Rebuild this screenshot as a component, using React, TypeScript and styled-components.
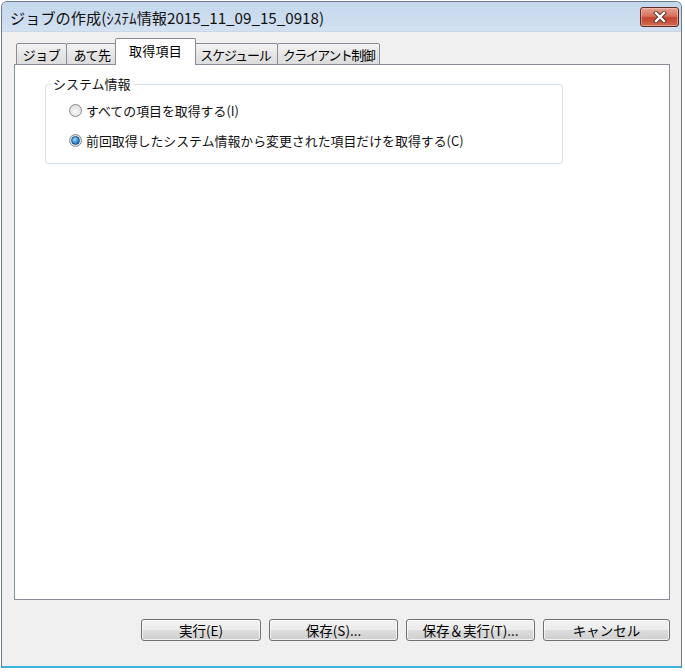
import React from "react";
import styled, { createGlobalStyle } from "styled-components";

const GlobalStyle = createGlobalStyle`
  html, body { margin: 0; padding: 0; background: #ffffff; }
  body { font-family: "Noto Sans CJK JP", "Noto Sans", sans-serif; }
  * { box-sizing: border-box; }
`;

const Page = styled.div`
  padding: 1px 0 0 1px;
  width: 685px;
  height: 672px;
`;

const Window = styled.div`
  width: 681px;
  height: 667px;
  display: flex;
  flex-direction: column;
  border: 1px solid #6f7a88;
  border-bottom: 2px solid #3bb3dc;
  border-radius: 6px 6px 0 0;
  overflow: hidden;
  background: #f0f0f0;
`;

const TitleBar = styled.div`
  height: 30px;
  flex: none;
  display: flex;
  align-items: center;
  justify-content: space-between;
  padding: 0 2px 0 8px;
  background: linear-gradient(#c4d7ec, #d3e1f1);
  border-bottom: 1px solid #c9d7e6;
`;

const TitleText = styled.div`
  font-size: 15.2px;
  color: #111;
  line-height: 18px;
  padding-top: 1px;
`;

const CloseButton = styled.div`
  width: 39px;
  height: 20px;
  margin-top: 1px;
  border: 1px solid #5e2a21;
  border-radius: 3px;
  background: linear-gradient(#e7a391 0%, #d7705c 45%, #c44530 55%, #cf6a4f 100%);
  box-shadow: inset 0 0 0 1px rgba(255, 220, 210, 0.45);
  display: flex;
  align-items: center;
  justify-content: center;
`;

const Body = styled.div`
  flex: 1;
  display: flex;
  flex-direction: column;
  padding: 6px 11px 25px 12px;
  background: #f0f0f0;
`;

const TabStrip = styled.div`
  height: 27px;
  flex: none;
  display: flex;
  align-items: flex-end;
  padding-left: 2px;
  position: relative;
  z-index: 1;
  margin-bottom: -1px;
`;

const Tab = styled.div<{ $w: number; $ls: number; $selected?: boolean; $first?: boolean }>`
  width: ${(p) => p.$w}px;
  height: ${(p) => (p.$selected ? 27 : 22)}px;
  margin-left: ${(p) => (p.$first ? 0 : p.$selected ? -3 : -1)}px;
  margin-right: ${(p) => (p.$selected ? -2 : 0)}px;
  border: 1px solid #898c95;
  border-bottom: ${(p) => (p.$selected ? "none" : "1px solid #898c95")};
  border-radius: 2px 2px 0 0;
  background: ${(p) =>
    p.$selected ? "#ffffff" : "linear-gradient(#f3f3f3, #e6e6e6 50%, #dcdcdc)"};
  position: relative;
  z-index: ${(p) => (p.$selected ? 2 : 1)};
  display: flex;
  align-items: center;
  justify-content: center;
  padding-bottom: ${(p) => (p.$selected ? 4 : 0)}px;
  font-size: 13px;
  letter-spacing: ${(p) => p.$ls}px;
  color: #000;
  white-space: nowrap;
`;

const Panel = styled.div`
  flex: 1;
  background: #ffffff;
  border: 1px solid #898c95;
  padding: 11px 0 0 30px;
`;

const Group = styled.fieldset`
  width: 518px;
  margin: 0;
  padding: 8px 0 13px 23px;
  border: 1px solid #d5dfe5;
  border-radius: 3px;
  display: flex;
  flex-direction: column;
  gap: 10px;
`;

const Legend = styled.legend`
  font-size: 13px;
  line-height: 16px;
  padding: 0 2px;
  margin-left: -18px;
  color: #111;
`;

const RadioRow = styled.label`
  height: 20px;
  display: flex;
  align-items: center;
  gap: 4px;
  font-size: 12.9px;
  color: #111;
  white-space: nowrap;
  padding-top: 1px;
`;

const RadioCircle = styled.span<{ $checked?: boolean }>`
  width: 13px;
  height: 13px;
  border-radius: 50%;
  border: 1px solid #8a8a8a;
  background: radial-gradient(circle at 50% 60%, #f8f8f8 0%, #e6e6e6 55%, #cfcfcf 100%);
  display: flex;
  align-items: center;
  justify-content: center;
  flex: none;
  margin-top: -1px;
  &::after {
    content: "";
    width: 7px;
    height: 7px;
    border-radius: 50%;
    display: ${(p) => (p.$checked ? "block" : "none")};
    background: radial-gradient(circle at 40% 35%, #aee0ff 0%, #3c96e0 45%, #0d4d9c 100%);
    border: 1px solid #1f4f8a;
  }
`;

const ButtonRow = styled.div`
  flex: none;
  display: flex;
  justify-content: flex-end;
  gap: 8px;
  margin-top: 19px;
`;

const Button = styled.div<{ $w: number }>`
  width: ${(p) => p.$w}px;
  height: 22px;
  border: 1px solid #707070;
  border-radius: 3px;
  background: linear-gradient(#f2f2f2 0%, #ebebeb 50%, #dddddd 50%, #cfcfcf 100%);
  box-shadow: inset 0 0 0 1px rgba(255, 255, 255, 0.7);
  display: flex;
  align-items: center;
  justify-content: center;
  font-size: 13.5px;
  color: #000;
  white-space: nowrap;
`;

const tabs = [
  { label: "ジョブ", w: 51, ls: -0.5 },
  { label: "あて先", w: 52, ls: -0.5 },
  { label: "取得項目", w: 81, ls: 0.3, selected: true },
  { label: "スケジュール", w: 85, ls: -1.1 },
  { label: "クライアント制御", w: 103, ls: -1.5 },
];

const buttons = [
  { label: "実行(E)", w: 120 },
  { label: "保存(S)...", w: 129 },
  { label: "保存＆実行(T)...", w: 129 },
  { label: "キャンセル", w: 127 },
];

export default function App() {
  return (
    <Page>
      <GlobalStyle />
      <Window>
        <TitleBar>
          <TitleText>ジョブの作成(ｼｽﾃﾑ情報2015_11_09_15_0918)</TitleText>
          <CloseButton>
            <svg width="14" height="12" viewBox="0 0 14 12">
              <path d="M3 2 L11 10 M11 2 L3 10" stroke="#4a2a25" strokeWidth="4" strokeLinecap="square" />
              <path d="M3 2 L11 10 M11 2 L3 10" stroke="#ffffff" strokeWidth="2.4" strokeLinecap="square" />
            </svg>
          </CloseButton>
        </TitleBar>
        <Body>
          <TabStrip>
            {tabs.map((t, i) => (
              <Tab key={t.label} $w={t.w} $ls={t.ls} $selected={t.selected} $first={i === 0}>
                {t.label}
              </Tab>
            ))}
          </TabStrip>
          <Panel>
            <Group>
              <Legend>システム情報</Legend>
              <RadioRow>
                <RadioCircle />
                すべての項目を取得する(I)
              </RadioRow>
              <RadioRow>
                <RadioCircle $checked />
                前回取得したシステム情報から変更された項目だけを取得する(C)
              </RadioRow>
            </Group>
          </Panel>
          <ButtonRow>
            {buttons.map((b) => (
              <Button key={b.label} $w={b.w}>
                {b.label}
              </Button>
            ))}
          </ButtonRow>
        </Body>
      </Window>
    </Page>
  );
}
